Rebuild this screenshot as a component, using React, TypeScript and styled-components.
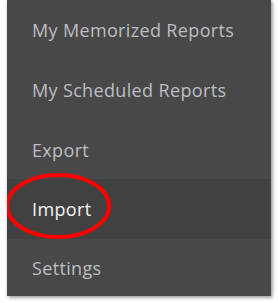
import React from "react";
import styled, { createGlobalStyle } from "styled-components";

const GlobalStyle = createGlobalStyle`
  body {
    margin: 0;
    background: #ffffff;
    font-family: "Open Sans", "Liberation Sans", sans-serif;
  }
`;

const Page = styled.div`
  width: 278px;
  height: 303px;
  padding: 0 7px 7px 7px;
  box-sizing: border-box;
`;

const Panel = styled.nav`
  position: relative;
  width: 264px;
  height: 296px;
  background: #484848;
  box-shadow: 1px 1px 4px rgba(0, 0, 0, 0.35), 2px 2px 3px rgba(0, 0, 0, 0.15);
  display: flex;
  flex-direction: column;
  overflow: hidden;
`;

const Item = styled.div<{ $active?: boolean; $h: number }>`
  height: ${(p) => p.$h}px;
  flex-shrink: 0;
  display: flex;
  align-items: center;
  padding-left: 25px;
  font-size: 18px;
  letter-spacing: 0.35px;
  color: ${(p) => (p.$active ? "#f4f4f4" : "#bcbec2")};
  background: ${(p) => (p.$active ? "#414141" : "transparent")};
`;

const Circle = styled.svg`
  position: absolute;
  left: -2px;
  top: 173px;
  pointer-events: none;
`;

const items = [
  { label: "My Memorized Reports", h: 60 },
  { label: "My Scheduled Reports", h: 60 },
  { label: "Export", h: 59 },
  { label: "Import", h: 60, active: true },
  { label: "Settings", h: 57 },
];

export default function App() {
  return (
    <Page>
      <GlobalStyle />
      <Panel>
        {items.map((it) => (
          <Item key={it.label} $h={it.h} $active={it.active}>
            {it.label}
          </Item>
        ))}
        <Circle width="112" height="70" viewBox="0 0 112 70">
          <ellipse cx="53" cy="33" rx="51" ry="31" fill="none" stroke="#ff0000" strokeWidth="4" />
        </Circle>
      </Panel>
    </Page>
  );
}
